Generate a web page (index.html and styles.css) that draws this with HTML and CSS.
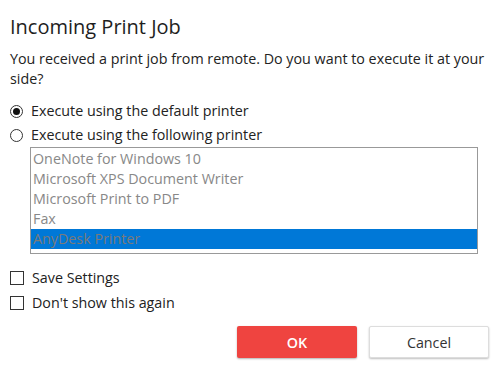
FILE: index.html
```html
<!DOCTYPE html>
<html>
<head>
<meta charset="utf-8">
<link rel="stylesheet" href="styles.css">
</head>
<body>
<div class="dialog">
  <h1 class="title">Incoming Print Job</h1>
  <p class="message">You received a print job from remote. Do you want to execute it at your side?</p>
  <div class="options">
    <label class="option"><span class="radio checked"></span>Execute using the default printer</label>
    <label class="option"><span class="radio"></span>Execute using the following printer</label>
  </div>
  <ul class="printers">
    <li>OneNote for Windows 10</li>
    <li>Microsoft XPS Document Writer</li>
    <li>Microsoft Print to PDF</li>
    <li>Fax</li>
    <li class="selected">AnyDesk Printer</li>
  </ul>
  <div class="checks">
    <label class="option"><span class="box"></span>Save Settings</label>
    <label class="option"><span class="box"></span>Don't show this again</label>
  </div>
  <div class="buttons">
    <button class="btn ok">OK</button>
    <button class="btn cancel">Cancel</button>
  </div>
</div>
</body>
</html>
```
FILE: styles.css
```css
html, body {
  margin: 0;
  padding: 0;
  background: #fff;
}
body {
  font-family: "Open Sans", "Noto Sans", sans-serif;
  color: #222;
  width: 500px;
  height: 370px;
  overflow: hidden;
}
.dialog {
  padding: 14px 11px 0 10px;
  display: flex;
  flex-direction: column;
}
.title {
  margin: 0;
  font-size: 20px;
  font-weight: 400;
  line-height: 26px;
  color: #1e1e1e;
}
.message {
  margin: 9px 0 0 0;
  font-size: 14.3px;
  line-height: 20px;
}
.options {
  margin-top: 12px;
  display: flex;
  flex-direction: column;
  gap: 4px;
}
.option {
  display: flex;
  align-items: center;
  font-size: 14.3px;
  line-height: 20px;
}
.radio {
  width: 11px;
  height: 11px;
  border: 1px solid #333;
  border-radius: 50%;
  margin-right: 8px;
  box-sizing: content-box;
  display: flex;
  align-items: center;
  justify-content: center;
}
.radio.checked::after {
  content: "";
  width: 7px;
  height: 7px;
  border-radius: 50%;
  background: #111;
}
.printers {
  list-style: none;
  margin: 2px 11px 0 20px;
  padding: 1px 0 4px 0;
  border: 1px solid #999;
  font-size: 14.3px;
  line-height: 20px;
  color: #888;
}
.printers li {
  padding-left: 2px;
  height: 20px;
}
.printers li.selected {
  background: #0078d7;
  color: #7a7a7a;
}
.checks {
  margin-top: 14px;
  display: flex;
  flex-direction: column;
  gap: 5px;
}
.box {
  width: 12px;
  height: 12px;
  border: 1px solid #333;
  margin-right: 8px;
}
.buttons {
  margin-top: 13px;
  display: flex;
  justify-content: flex-end;
  gap: 12px;
}
.btn {
  width: 120px;
  height: 32px;
  font-family: "Open Sans", "Noto Sans", sans-serif;
  font-size: 14.3px;
  border-radius: 2px;
  cursor: pointer;
}
.ok {
  background: #ef4440;
  border: none;
  color: #fff;
  font-weight: 600;
  box-shadow: 0 1px 2px rgba(0,0,0,0.3);
}
.cancel {
  background: #fff;
  border: 1px solid #ddd;
  color: #333;
  box-shadow: 0 1px 2px rgba(0,0,0,0.25);
}
```
